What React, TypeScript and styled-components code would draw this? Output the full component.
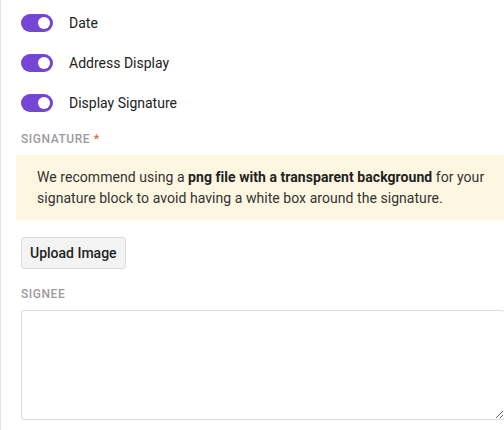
import React from 'react';
import styled, { createGlobalStyle } from 'styled-components';

const GlobalStyle = createGlobalStyle`
  html, body {
    margin: 0;
    padding: 0;
    background: #fff;
    overflow: hidden;
  }
  body {
    font-family: Roboto, "Liberation Sans", sans-serif;
  }
`;

interface ToggleProps {
  label: string;
  checked?: boolean;
}

const ToggleRow = ({ label, checked = true }: ToggleProps) => {
  return (
    <StyledToggleRow>
      <StyledSwitch $checked={checked}>
        <StyledKnob $checked={checked} />
      </StyledSwitch>
      <StyledToggleLabel>{label}</StyledToggleLabel>
    </StyledToggleRow>
  );
};

export default function App() {
  return (
    <>
      <GlobalStyle />
      <StyledPanel>
        <StyledToggleGroup>
          <ToggleRow label="Date" />
          <ToggleRow label="Address Display" />
          <ToggleRow label="Display Signature" />
        </StyledToggleGroup>

        <StyledFieldLabel $top={19}>
          Signature <StyledRequired>*</StyledRequired>
        </StyledFieldLabel>
        <StyledNotice>
          We recommend using a <b>png file with a transparent background</b> for your
          signature block to avoid having a white box around the signature.
        </StyledNotice>

        <StyledField>
          <StyledButton type="button">Upload Image</StyledButton>
        </StyledField>

        <StyledFieldLabel $top={17}>Signee</StyledFieldLabel>
        <StyledField>
          <StyledTextArea />
        </StyledField>
      </StyledPanel>
    </>
  );
}

const StyledPanel = styled.div`
  width: 520px;
  min-height: 430px;
  box-sizing: border-box;
  border-left: 1px solid #e4e4ea;
  padding: 14px 0 0 15px;
`;

const StyledToggleGroup = styled.div`
  display: flex;
  flex-direction: column;
  gap: 22px;
  padding-left: 5px;
`;

const StyledToggleRow = styled.label`
  display: flex;
  align-items: center;
  gap: 16px;
  height: 18px;
`;

const StyledSwitch = styled.span<{ $checked: boolean }>`
  position: relative;
  width: 32px;
  height: 18px;
  border-radius: 9px;
  background: ${(p) => (p.$checked ? '#7545d4' : '#c9c9d0')};
  flex-shrink: 0;
`;

const StyledKnob = styled.span<{ $checked: boolean }>`
  position: absolute;
  top: 3px;
  left: ${(p) => (p.$checked ? '17px' : '3px')};
  width: 12px;
  height: 12px;
  border-radius: 50%;
  background: #fff;
`;

const StyledToggleLabel = styled.span`
  font-size: 14px;
  color: #222;
`;

const StyledFieldLabel = styled.div<{ $top?: number }>`
  margin: ${(p) => p.$top ?? 20}px 0 8px 5px;
  font-size: 12px;
  line-height: 16px;
  font-weight: 500;
  letter-spacing: 0.55px;
  text-transform: uppercase;
  color: #9b9b9b;
`;

const StyledRequired = styled.span`
  color: #e36a3d;
`;

const StyledNotice = styled.div`
  padding: 12px 20px 11px 21px;
  background: #fdf6e1;
  font-size: 14px;
  line-height: 21px;
  letter-spacing: 0.05px;
  color: #333;

  b {
    font-weight: 700;
    color: #222;
  }
`;

const StyledField = styled.div`
  padding-left: 5px;
  margin-top: 17px;

  &:last-child {
    margin-top: 0;
  }
`;

const StyledButton = styled.button`
  height: 32px;
  padding: 0 8px;
  border: 1px solid #dcdcdc;
  border-radius: 3px;
  background: #f3f3f3;
  font-family: Roboto, "Liberation Sans", sans-serif;
  font-size: 14px;
  font-weight: 500;
  color: #222;
  cursor: pointer;
`;

const StyledTextArea = styled.textarea`
  display: block;
  box-sizing: border-box;
  width: 484px;
  height: 110px;
  border: 1px solid #dcdce0;
  border-radius: 3px;
  background: #fff;
  font-family: Roboto, "Liberation Sans", sans-serif;
  font-size: 14px;
`;
